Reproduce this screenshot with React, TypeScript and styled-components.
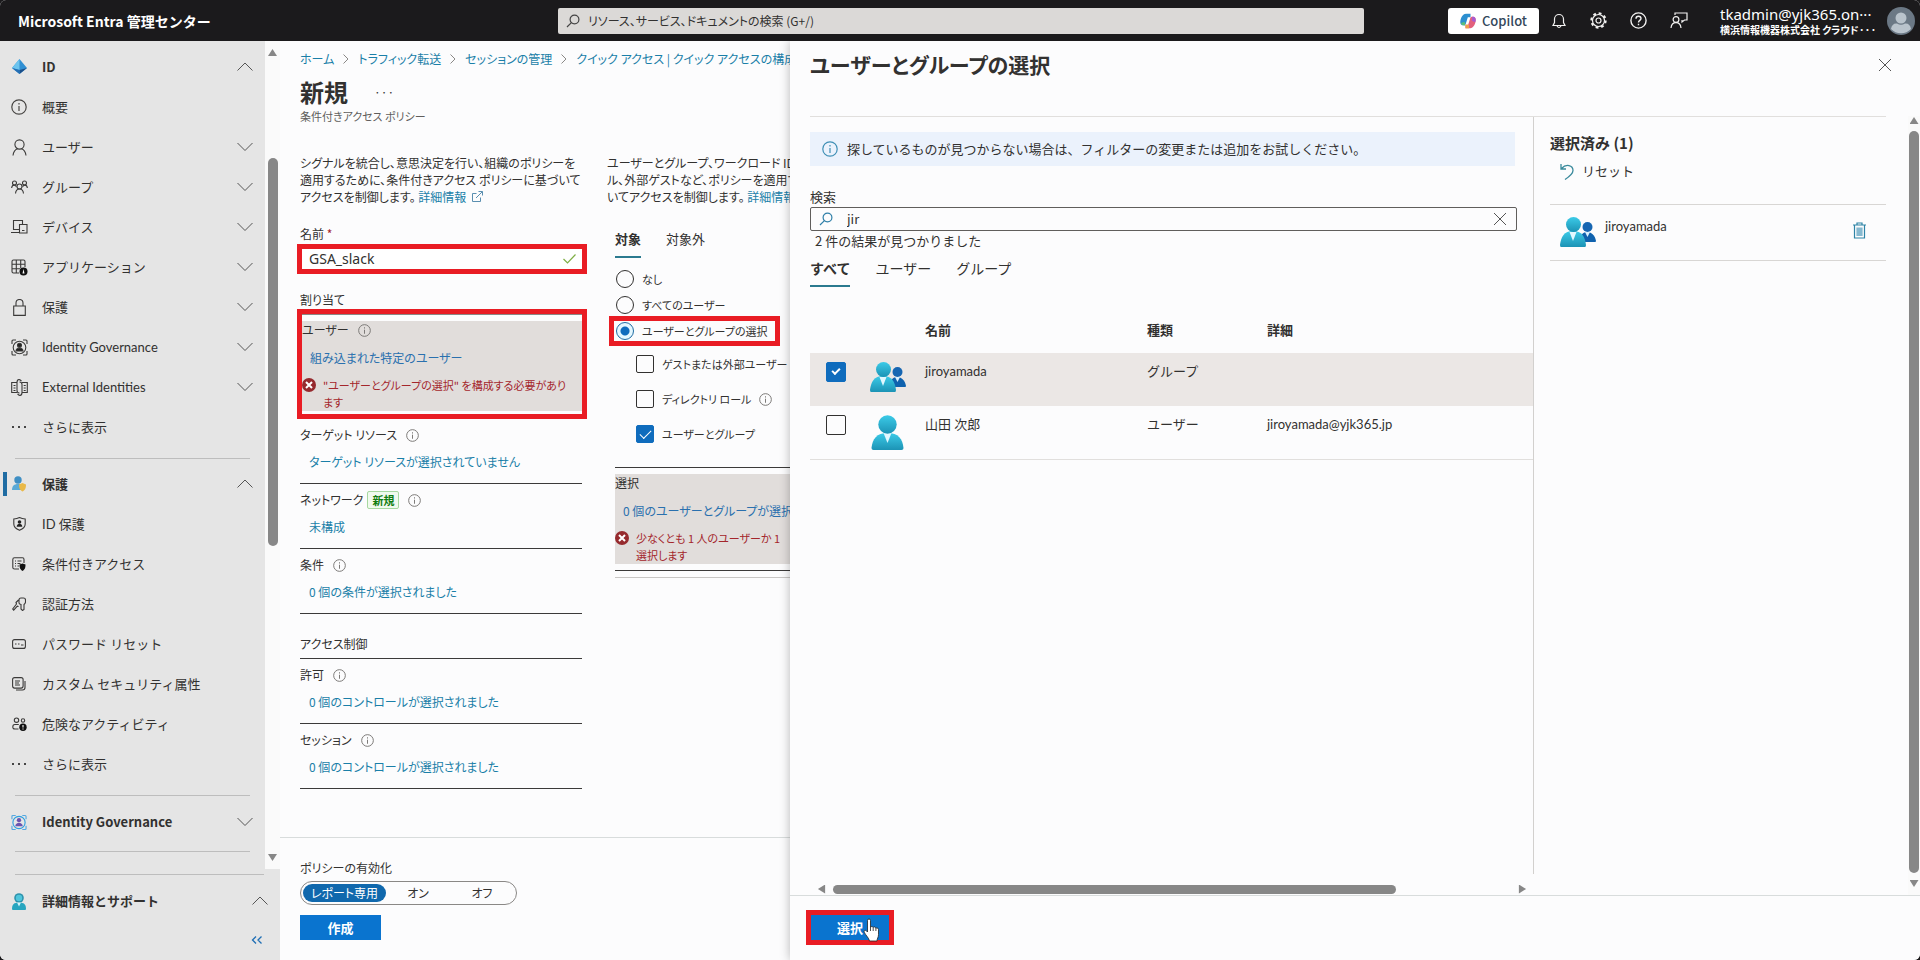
import React from "react";
import styled, { createGlobalStyle, css } from "styled-components";

const RED = "#e91c24";
const LINK = "#1a7fa8";
const LINE = "#3b3a39";

const GlobalStyle = createGlobalStyle`
  *, *::before, *::after { box-sizing: border-box; }
  body {
    margin: 0;
    background: #1b1a1c;
    color: #323130;
    font-family: "Noto Sans CJK JP", "Noto Sans", sans-serif;
    font-size: 13px;
    line-height: 18px;
  }
  button, input { font: inherit; color: inherit; }
  button { background: none; border: 0; padding: 0; cursor: pointer; }
  a { color: ${LINK}; text-decoration: none; }
  h1, h2, h3, p, ul { margin: 0; padding: 0; font-weight: inherit; font-size: inherit; }
  ul { list-style: none; }
  svg { display: block; flex: none; }
`;

const Shell = styled.div`
  display: flex;
  flex-direction: column;
  min-height: 100vh;
  background: #fcfcfd;
  border-radius: 6px;
  overflow: hidden;
`;

/* ---------- top bar ---------- */
const TopBar = styled.header`
  display: grid;
  grid-template-columns: 540px minmax(200px, 800fr) 540fr;
  align-items: center;
  height: 41px;
  background: #1b1a1c;
  color: #fff;
`;
const Brand = styled.a`
  padding-left: 18px;
  color: #fff;
  font-size: 14px;
  font-weight: 700;
  white-space: nowrap;
`;
const GlobalSearch = styled.label`
  display: flex;
  align-items: center;
  gap: 6px;
  height: 26px;
  margin-left: 18px;
  padding: 0 8px;
  border-radius: 2px;
  background: #dbd9d7;
  color: #323130;
  font-size: 12px;
  input {
    flex: 1;
    min-width: 0;
    border: 0;
    outline: 0;
    background: none;
    font-feature-settings: "palt";
  }
  input::placeholder { color: #323130; opacity: 1; }
`;
const TopActions = styled.div`
  display: flex;
  align-items: center;
  justify-content: flex-end;
  padding-right: 5px;
`;
const CopilotButton = styled.button`
  display: flex;
  align-items: center;
  justify-content: center;
  gap: 6px;
  width: 91px;
  height: 26px;
  border-radius: 3px;
  background: #fff;
  color: #33475b;
  font-size: 13px;
  font-weight: 500;
`;
const TopIcon = styled.button`
  display: grid;
  place-items: center;
  width: 40px;
  height: 40px;
`;
const Account = styled.div`
  width: 162px;
  margin-left: 21px;
  margin-right: 5px;
  white-space: nowrap;
`;
const AccountMail = styled.div`
  font-family: "Noto Sans", "Noto Sans CJK JP", sans-serif;
  font-size: 15px;
  line-height: 18px;
`;
const AccountOrg = styled.div`
  font-size: 10px;
  font-weight: 700;
  line-height: 14px;
  font-feature-settings: "palt";
`;

/* ---------- frame ---------- */
const Body = styled.div`
  display: flex;
  flex: 1;
`;

/* ---------- side navigation ---------- */
const Sidebar = styled.nav`
  display: flex;
  flex-direction: column;
  flex: none;
  width: 280px;
  background: #e5e5e5;
`;
const SideScroll = styled.div`
  display: flex;
  height: 828px;
`;
const SideList = styled.div`
  flex: 1;
  padding-top: 6px;
`;
const Rule = styled.hr<{ $before?: number; $after?: number; $right?: number }>`
  height: 1px;
  margin: ${(p) => p.$before ?? 11}px ${(p) => p.$right ?? 15}px ${(p) => p.$after ?? 5}px 15px;
  border: 0;
  background: #bdbdbd;
`;
const NavRow = styled.button<{ $strong?: boolean; $current?: boolean }>`
  display: flex;
  align-items: center;
  width: 100%;
  height: 40px;
  padding: 0 12px 0 ${(p) => (p.$current ? 7 : 10)}px;
  text-align: left;
  ${(p) =>
    p.$strong
      ? css`
          font-weight: 700;
        `
      : css`
          font-family: Lato, "Noto Sans CJK JP", sans-serif;
        `}
  ${(p) =>
    p.$current &&
    css`
      &::before {
        content: "";
        width: 4px;
        height: 24px;
        margin: 0 0 0 -4px;
        background: #1f6ca3;
      }
    `}
  > span:nth-of-type(1) {
    display: grid;
    place-items: center;
    width: 18px;
    margin-left: ${(p) => (p.$current ? 3 : 0)}px;
  }
  > span:nth-of-type(2) {
    flex: 1;
    margin-left: 14px;
  }
`;
const CollapseRow = styled.div`
  display: flex;
  justify-content: flex-end;
  padding: 10px 17px 0;
`;

/* ---------- scroll bars ---------- */
const VScroll = styled.div<{ $width: number; $top?: number }>`
  display: flex;
  flex-direction: column;
  align-items: center;
  flex: none;
  width: ${(p) => p.$width}px;
  padding: ${(p) => p.$top ?? 7}px 0 7px;
  background: #fafafa;
`;
const VTrack = styled.div`
  flex: 1;
  width: 10px;
  margin: 6px 0;
`;
const VThumb = styled.div<{ $offset?: number; $size: string }>`
  height: ${(p) => p.$size};
  margin-top: ${(p) => p.$offset ?? 0}px;
  border-radius: 5px;
  background: #878787;
`;
const HScrollRow = styled.div`
  display: grid;
  grid-template-columns: minmax(0, 724fr) minmax(0, 352fr);
  margin: -12px 34px 0 20px;
`;
const HScroll = styled.div`
  display: flex;
  align-items: center;
  height: 12px;
  padding: 0 7px;
`;
const HTrack = styled.div`
  flex: 1;
  margin: 0 7px;
`;
const HThumb = styled.div`
  width: 83%;
  height: 9px;
  border-radius: 5px;
  background: #878787;
`;
const Arrow = styled.i<{ $dir: "up" | "down" | "left" | "right" }>`
  width: 9px;
  height: 9px;
  background: #878787;
  clip-path: ${(p) =>
    ({
      up: "polygon(50% 10%, 100% 90%, 0 90%)",
      down: "polygon(0 10%, 100% 10%, 50% 90%)",
      left: "polygon(10% 50%, 90% 0, 90% 100%)",
      right: "polygon(10% 0, 90% 50%, 10% 100%)",
    })[p.$dir]};
`;

/* ---------- policy blade ---------- */
const Policy = styled.main`
  display: flex;
  flex-direction: column;
  flex: none;
  width: 510px;
  overflow: hidden;
  font-size: 12px;
  font-feature-settings: "palt";
  white-space: nowrap;
`;
const Crumbs = styled.nav`
  display: flex;
  align-items: center;
  gap: 9px;
  padding: 9px 0 0 20px;
`;
const TitleRow = styled.div`
  display: flex;
  align-items: center;
  gap: 26px;
  padding: 8px 0 0 20px;
  h1 {
    font-size: 24px;
    font-weight: 700;
    line-height: 32px;
  }
`;
const Subtitle = styled.p`
  padding-left: 20px;
  color: #605e5c;
  font-size: 11px;
  line-height: 17px;
`;
const Columns = styled.div`
  display: grid;
  grid-template-columns: 282px 1fr;
  column-gap: 25px;
  padding: 29px 0 0 20px;
`;
const Lead = styled.p`
  line-height: 17px;
`;
const InlineIcon = styled.span`
  display: inline-block;
  margin-left: 3px;
`;
const FieldLabel = styled.label`
  display: block;
  margin-top: 20px;
  em { color: #a4262c; font-style: normal; }
`;
const Marked = styled.div<{ $top: number }>`
  margin: ${(p) => p.$top}px -5px 0 -3px;
  border: 5px solid ${RED};
`;
const NameField = styled.div`
  display: flex;
  align-items: center;
  height: 20px;
  padding: 0 6px 0 7px;
  background: #fff;
  input {
    flex: 1;
    min-width: 0;
    padding: 0;
    border: 0;
    outline: 0;
    background: none;
    font-family: "Noto Sans", sans-serif;
    font-size: 14px;
    line-height: 18px;
  }
`;
const GroupHeading = styled.h2<{ $top: number; $ruled?: boolean }>`
  margin-top: ${(p) => p.$top}px;
  padding-bottom: ${(p) => (p.$ruled ? 5 : 0)}px;
  border-bottom: ${(p) => (p.$ruled ? `1px solid ${LINE}` : "0")};
`;
const Assignment = styled.section`
  height: 65px;
  padding-top: 7px;
  border-bottom: 1px solid ${LINE};
`;
const LabelLine = styled.div`
  display: flex;
  align-items: center;
  gap: 9px;
  height: 18px;
`;
const ValueLink = styled.a`
  display: block;
  margin: 9px 0 0 9px;
`;
const NewBadge = styled.span`
  margin: 0 0 0 -5px;
  padding: 0 4px;
  border: 1px solid #a7d8a0;
  border-radius: 2px;
  background: #f0faee;
  color: #107c10;
  font-size: 11px;
  font-weight: 700;
  line-height: 16px;
`;
const Invalid = styled.section`
  background: #e1dddb;
  ${ValueLink} {
    margin: 10px 0 0 8px;
    color: #2a70ae;
  }
`;
const ErrorLine = styled.div`
  display: flex;
  gap: 7px;
  margin-top: 10px;
  color: #a4262c;
  font-size: 11px;
  line-height: 17px;
  svg { margin-top: 1px; }
`;
const InvalidFrame = styled.div`
  padding: 6px 0 3px;
  border-top: 1px solid #8a8886;
`;
const ConditionBody = styled.div`
  padding-left: 8px;
`;

/* ---------- tabs ---------- */
const Tabs = styled.div<{ $gap: number; $size: number }>`
  display: flex;
  gap: ${(p) => p.$gap}px;
  font-size: ${(p) => p.$size}px;
`;
const ConditionTabs = styled(Tabs)`
  margin: 25px 0 8px;
`;
const Tab = styled.button<{ $on?: boolean }>`
  height: 28px;
  padding-bottom: 8px;
  border-bottom: 2px solid ${(p) => (p.$on ? "#2b7a8f" : "transparent")};
  font-weight: ${(p) => (p.$on ? 700 : 400)};
`;

/* ---------- choices ---------- */
const Choice = styled.label<{ $height: number; $indent?: number }>`
  display: flex;
  align-items: center;
  gap: 8px;
  height: ${(p) => p.$height}px;
  margin-left: ${(p) => p.$indent ?? 1}px;
  font-size: 11px;
`;
const Radio = styled.input.attrs({ type: "radio" })`
  appearance: none;
  flex: none;
  width: 18px;
  height: 18px;
  margin: 0;
  border: 1px solid #323130;
  border-radius: 50%;
  &:checked {
    border-color: #1f6ca3;
    background: radial-gradient(circle, #0f6cbd 4px, #e4f7ff 5px);
  }
`;
const Check = styled.input.attrs({ type: "checkbox" })<{ $bold?: boolean }>`
  appearance: none;
  display: grid;
  place-items: center;
  flex: none;
  width: ${(p) => (p.$bold ? 20 : 18)}px;
  height: ${(p) => (p.$bold ? 20 : 18)}px;
  margin: 0;
  border: 1px solid #323130;
  border-radius: 2px;
  &:checked {
    border-color: #0f6cbd;
    background: #0f6cbd;
  }
  &:checked::before {
    content: "";
    width: ${(p) => (p.$bold ? 8 : 11)}px;
    height: ${(p) => (p.$bold ? 5 : 6)}px;
    margin-top: -3px;
    border: solid #fff;
    border-width: 0 0 ${(p) => (p.$bold ? "2px 2px" : "1px 1px")};
    rotate: -45deg;
  }
`;
const MarkedChoice = styled.div`
  width: 171px;
  margin: -2px 0 0 -6px;
  border: 5px solid ${RED};
  padding-left: 1px;
`;
const SelectBlock = styled.div`
  margin-top: 15px;
  padding: 6px 0;
  border-top: 1px solid ${LINE};
  border-bottom: 1px solid ${LINE};
`;
const ThinLine = styled.hr`
  height: 1px;
  margin: 6px 0 0;
  border: 0;
  background: #c8c6c4;
`;

/* ---------- policy footer ---------- */
const PolicyFooter = styled.footer`
  margin-top: auto;
  height: 123px;
  padding: 21px 20px 0;
  border-top: 1px solid #d8dcdc;
`;
const Toggle = styled.div`
  display: grid;
  grid-template-columns: 83px 64px 64px;
  width: 217px;
  height: 24px;
  margin: 4px 0 10px;
  padding: 2px;
  border: 1px solid #8a8886;
  border-radius: 12px;
`;
const ToggleOption = styled.button<{ $on?: boolean }>`
  border-radius: 9px;
  line-height: 18px;
  font-feature-settings: "palt";
  ${(p) => p.$on && "background: #1068ad; color: #fff;"}
`;
const Primary = styled.button<{ $width: number }>`
  display: block;
  width: ${(p) => p.$width}px;
  height: 25px;
  background: #0a74cf;
  color: #fff;
  font-size: 13px;
  font-weight: 700;
`;

/* ---------- selection panel ---------- */
const Panel = styled.aside`
  display: flex;
  flex-direction: column;
  flex: 1;
  min-width: 0;
  position: relative;
  background: #fcfcfd;
  box-shadow: 0 0 10px rgba(0, 0, 0, 0.28);
  clip-path: inset(0 0 0 -12px);
`;
const PanelHead = styled.div`
  display: flex;
  justify-content: space-between;
  align-items: flex-start;
  height: 75px;
  padding: 4px 28px 0 20px;
  h2 {
    font-size: 21px;
    font-weight: 700;
    line-height: 38px;
    font-feature-settings: "palt";
  }
  button { padding-top: 13px; }
`;
const PanelBody = styled.div`
  display: flex;
  flex: 1;
`;
const PanelContent = styled.div`
  display: grid;
  grid-template-columns: minmax(0, 724fr) minmax(0, 352fr);
  flex: 1;
  margin: 0 22px 21px 20px;
  border-top: 1px solid #e1dfdd;
`;
const Results = styled.section`
  display: flex;
  flex-direction: column;
  padding-top: 15px;
  border-right: 1px solid #d2d0ce;
`;
const Notice = styled.p`
  display: flex;
  align-items: center;
  gap: 9px;
  height: 34px;
  margin-right: 18px;
  padding-left: 12px;
  background: #ebf2fc;
`;
const SearchLabel = styled.label`
  display: block;
  margin-top: 22px;
`;
const SearchBox = styled.div`
  display: flex;
  align-items: center;
  height: 24px;
  margin: 1px 16px 1px 0;
  padding: 0 9px 0 8px;
  border: 1px solid #605e5c;
  border-radius: 2px;
  input {
    flex: 1;
    min-width: 0;
    margin-left: 14px;
    padding: 0;
    border: 0;
    outline: 0;
    background: none;
  }
`;
const Count = styled.p`
  margin: 0 0 9px 5px;
`;
const ResultTable = styled.table`
  width: 100%;
  margin-top: 31px;
  border-collapse: collapse;
  table-layout: fixed;
  th, td {
    padding: 0;
    text-align: left;
    vertical-align: top;
  }
  th { height: 35px; padding-top: 3px; font-weight: 700; }
  tbody tr { height: 53px; }
  td {
    padding-top: 9px;
    font-family: Lato, "Noto Sans CJK JP", sans-serif;
  }
  td:first-child { padding-left: 16px; }
  tbody tr:first-child { background: #ebe7e5; }
  tbody tr:last-child { border-bottom: 1px solid #e1dfdd; }
`;
const Side = styled.section`
  padding: 16px 0 0 16px;
  h3 {
    font-size: 15px;
    font-weight: 700;
    line-height: 20px;
  }
`;
const ResetButton = styled.button`
  display: flex;
  align-items: center;
  gap: 8px;
  margin: 9px 0 24px 10px;
`;
const Picked = styled.div`
  display: flex;
  gap: 9px;
  height: 57px;
  padding: 12px 20px 0 10px;
  border-top: 1px solid #d8d6d4;
  border-bottom: 1px solid #d8d6d4;
  > span { flex: 1; font-family: Lato, sans-serif; }
  > button { align-self: flex-start; margin-top: 5px; }
`;
const PanelFooter = styled.footer`
  height: 65px;
  padding: 14px 0 0 16px;
  border-top: 1px solid #d8dcdc;
`;
const MarkedButton = styled.div`
  position: relative;
  width: 88px;
  border: 5px solid ${RED};
`;
const Pointer = styled.span`
  position: absolute;
  left: 52px;
  top: 3px;
`;

/* ---------- icons ---------- */
const Chevron = ({ up }: { up?: boolean }) => (
  <svg width="16" height="10" viewBox="0 0 16 10" fill="none" stroke="#555">
    <path d={up ? "M.5 8.5 8 1l7.5 7.5" : "M.5 1 8 8.5 15.5 1"} />
  </svg>
);
const CrumbSep = () => (
  <svg width="6" height="10" viewBox="0 0 6 10" fill="none" stroke="#8a8886">
    <path d="M.5.5 5 5 .5 9.5" />
  </svg>
);
const Info = ({ size = 13, color = "#797775" }: { size?: number; color?: string }) => (
  <svg width={size} height={size} viewBox="0 0 16 16" fill="none" stroke={color} strokeWidth="1.2">
    <circle cx="8" cy="8" r="7.2" />
    <path d="M8 7v5M8 4v1.6" />
  </svg>
);
const ErrorIcon = () => (
  <svg width="14" height="14" viewBox="0 0 14 14">
    <circle cx="7" cy="7" r="7" fill="#962a2e" />
    <path d="m4 4 6 6m0-6-6 6" stroke="#fff" strokeWidth="2" />
  </svg>
);
const Cross = ({ size = 14 }: { size?: number }) => (
  <svg width={size} height={size} viewBox="0 0 14 14" stroke="#555">
    <path d="m1 1 12 12M13 1 1 13" />
  </svg>
);
const Magnifier = ({ color }: { color: string }) => (
  <svg width="14" height="14" viewBox="0 0 14 14" fill="none" stroke={color} strokeWidth="1.2">
    <circle cx="8.5" cy="5.5" r="4.4" />
    <path d="M5.4 8.6 1 13" />
  </svg>
);
const ExternalLink = () => (
  <InlineIcon>
    <svg width="11" height="11" viewBox="0 0 11 11" fill="none" stroke="#5a8fb0">
      <path d="M4.500 2.500h-4v8h8v-4M4 7l6.300-6.300M6.500.5h4v4" />
    </svg>
  </InlineIcon>
);
const Tick = () => (
  <svg width="13" height="10" viewBox="0 0 13 10" fill="none" stroke="#7fae45" strokeWidth="1.200">
    <path d="m.5 5 4 4 8-8.500" />
  </svg>
);
const Person = ({ width, height, group }: { width: number; height: number; group?: boolean }) => (
  <svg width={width} height={height} viewBox={group ? "0 0 36 30" : "0 0 32 35"}>
    <defs>
      <linearGradient id="teal" x1="0" y1="0" x2="0" y2="1">
        <stop offset="0" stopColor="#3ccbe8" />
        <stop offset="1" stopColor="#1c93b5" />
      </linearGradient>
    </defs>
    {group ? (
      <>
        <path d="M20 24c0-6 3-9 7-9s8 3 9 9q0 1-1 1H20z" fill="#0f62ae" />
        <path d="m25 15 2.500 5 2.500-5z" fill="#d9f1ff" />
        <circle cx="27.500" cy="10" r="5" fill="#1666b2" />
        <path d="M1 30q-1 0-1-2c1-8 4-14 13-14s12 6 13 14q0 2-1 2z" fill="url(#teal)" />
        <path d="m9.500 15 3.500 9 3.500-9z" fill="#e2f8ff" />
        <circle cx="13.500" cy="7.500" r="7.500" fill="url(#teal)" />
      </>
    ) : (
      <>
        <path d="M2 35q-2 0-2-2c1-9 5-15 16-15s15 6 16 15q0 2-2 2z" fill="url(#teal)" />
        <path d="m12 18 4 10 4-10z" fill="#e2f8ff" />
        <circle cx="16" cy="9.500" r="9.200" fill="url(#teal)" />
      </>
    )}
  </svg>
);
const Hand = () => (
  <svg width="17" height="24" viewBox="0 0 17 24" fill="#fff" stroke="#222" strokeWidth=".8">
    <path d="M4.500 14V2.500a1.500 1.500 0 0 1 3 0V9q1.500-1.200 2.700.3 1.700-1 2.600.6 2.400-.6 2.700 1.600v5c0 3-1.500 4-1.500 6.500H6.500C6 20 2.500 17 1.200 14.200c-.6-1.500 1-2.400 2-1.500z" />
    <path d="M7.500 9v4M10.200 9.500V13M12.900 10v3" />
  </svg>
);

const line = { fill: "none", stroke: "#3b3a39", strokeWidth: 1.1 };
const NAV_ICONS: Record<string, React.ReactNode> = {
  entra: (
    <svg width="17" height="16" viewBox="0 0 17 16">
      <path d="M8.500 0 1 9l7.500 6L16 9z" fill="#2f8fd3" />
      <path d="M8.500 0 1 9l7.500 2z" fill="#6cc4ee" />
      <path d="M8.500 11 16 9l-7.500 6z" fill="#1b4f8a" />
      <path d="M8.500 11 1 9l7.500 6z" fill="#256fb4" />
    </svg>
  ),
  info: <Info size={16} color="#484644" />,
  user: (
    <svg width="15" height="17" viewBox="0 0 15 17" {...line}>
      <circle cx="7.500" cy="5.500" r="4.600" />
      <path d="M1 16.500c.5-4 2-6 4.500-6.800M14 16.500c-.5-4-2-6-4.500-6.800" />
    </svg>
  ),
  group: (
    <svg width="17" height="14" viewBox="0 0 17 14" {...line}>
      <circle cx="3.500" cy="3" r="2" />
      <circle cx="13.500" cy="3" r="2" />
      <circle cx="8.500" cy="6.500" r="2.500" />
      <path d="M.6 8c.2-2 1-3 2.900-3l2 1.500M16.400 8c-.2-2-1-3-2.900-3l-2 1.500M4.500 13.500c.3-3 1.500-4.500 4-4.500s3.700 1.500 4 4.500" />
    </svg>
  ),
  device: (
    <svg width="17" height="14" viewBox="0 0 17 14" {...line}>
      <path d="M8 9.500H2.500v-9h9V4M0 12.500h8" />
      <path d="M8.500 4.500h7.500v8.500H8.500zM11 10.500h2.500" />
    </svg>
  ),
  apps: (
    <svg width="17" height="17" viewBox="0 0 17 17" {...line}>
      <path d="M8 14H2.500Q1 14 1 12.500v-10Q1 1 2.500 1h10Q14 1 14 2.500V8M1 5.300h13M1 9.700h8M5.300 1v13M9.700 1v8" />
      <circle cx="12.500" cy="12.500" r="4" fill="#111" stroke="none" />
      <path d="m12.500 10 1 4.500h-2z" fill="#fff" stroke="none" />
    </svg>
  ),
  lock: (
    <svg width="13" height="17" viewBox="0 0 13 17" {...line}>
      <path d="M.7 7h11.600v9.400H.7zM3 7V4a3.500 3.500 0 0 1 7 0v3" />
    </svg>
  ),
  governance: (
    <svg width="17" height="17" viewBox="0 0 17 17" {...line}>
      <path d="M1 5V2q0-1 1-1h3M12 1h3q1 0 1 1v3M16 12v3q0 1-1 1h-3M5 16H2q-1 0-1-1v-3" />
      <circle cx="8.500" cy="8.500" r="6.300" />
      <circle cx="8.500" cy="6.300" r="2" fill="#222" />
      <path d="M5 12c.3-4 6.700-4 7 0z" fill="#222" />
    </svg>
  ),
  external: (
    <svg width="17" height="17" viewBox="0 0 17 17" {...line}>
      <path d="M6 3.500H.7v10H6M11 3.500h5.300v10H11M6 3.500q0-3 2.500-3M11 13.500q0 3-2.500 3M8.500 3q2.500 0 2.500 2.500v8M8.500 14Q6 14 6 11.500v-8M8.500.5l2 1.500M8.500 16.500l-2-1.500" />
      <path d="M2.500 6.500h2M2.500 9h2M2.500 11.500h2M12.700 6.500h2M12.700 9h2M12.700 11.500h2" />
    </svg>
  ),
  more: (
    <svg width="16" height="2" viewBox="0 0 16 2" fill="#444">
      <path d="M1 0h2v2H1zM7 0h2v2H7zM13 0h2v2h-2z" />
    </svg>
  ),
  protect: (
    <svg width="16" height="16" viewBox="0 0 16 16">
      <circle cx="7" cy="4" r="3.700" fill="#3f8fc4" />
      <path d="M1 14c0-4 2-6 6-6s5 2 6 6z" fill="#5aa9d6" />
      <path d="M8 8.500 11.500 7 15 8.500c0 4-1 5.500-3.500 7C9 14 8 12.500 8 8.500z" fill="#e9b949" />
    </svg>
  ),
  shield: (
    <svg width="13" height="14" viewBox="0 0 13 14" {...line}>
      <path d="M.8 2Q4 2 6.500.6 9 2 12.200 2v5q0 4-5.700 6.300Q.8 11 .8 7z" />
      <circle cx="6.500" cy="5" r="1.800" fill="#222" stroke="none" />
      <path d="M3.700 9.800c0-4 5.600-4 5.600 0z" fill="#222" stroke="none" />
    </svg>
  ),
  conditional: (
    <svg width="14" height="14" viewBox="0 0 14 14" {...line}>
      <path d="M7 12H2.500Q.8 12 .8 10.500v-8Q.8.8 2.500.8h8q1.500 0 1.500 1.700V6M3 4h1m1.500 0h4M3 6.500h1m1.500 0h3M3 9h1m1.500 0H7" />
      <path d="m7.500 7.500 3-1 3 1c0 4-1 5-3 6.500-2-1.500-3-2.500-3-6.500z" fill="#111" stroke="none" />
    </svg>
  ),
  keys: (
    <svg width="14" height="14" viewBox="0 0 14 14" {...line}>
      <path d="M7 6V3q0-2 2-2h2.500q2 0 2 2v2q0 1.500-1.500 2.500v5L10.500 13.500 9 12V7.500Q7 7 7 6zM6.500 3 4 5.500l.5 1.500L.7 12l1 1.200 3.600-4 1.300.300" />
    </svg>
  ),
  password: (
    <svg width="14" height="10" viewBox="0 0 14 10" {...line}>
      <rect x=".6" y=".6" width="12.800" height="8.800" rx="2" />
      <path d="M3 5h1.500M6 5h1.500M9 6h2.500" />
    </svg>
  ),
  attributes: (
    <svg width="14" height="14" viewBox="0 0 14 14" {...line}>
      <rect x=".6" y=".6" width="10.500" height="10.500" rx="2" />
      <path d="M3 4h5M3 6h4M3 8h5M13 4v6.500q0 2.500-2.500 2.500H4" />
    </svg>
  ),
  risky: (
    <svg width="15" height="14" viewBox="0 0 15 14" {...line}>
      <circle cx="4.500" cy="3.200" r="2.200" />
      <circle cx="11" cy="3.500" r="1.700" />
      <path d="M6.500 12H3Q.8 12 .8 10q0-2.500 2-2.500h4" />
      <circle cx="11" cy="10.200" r="3.700" fill="#111" stroke="none" />
      <path d="M11 8v2.500M11 11.500v1" stroke="#fff" />
    </svg>
  ),
  governanceColor: (
    <svg width="16" height="17" viewBox="0 0 17 17" fill="none" stroke="#2d9fe0" strokeWidth="1.200">
      <path d="M1 5V2q0-1 1-1h3M12 1h3q1 0 1 1v3M16 12v3q0 1-1 1h-3M5 16H2q-1 0-1-1v-3" stroke="#54a8e0" />
      <circle cx="8.500" cy="8.500" r="6.500" />
      <circle cx="8.500" cy="6" r="2.300" fill="#6b55b0" stroke="none" />
      <path d="M4.500 12.500c.3-5 7.700-5 8 0z" fill="#6b55b0" stroke="none" />
    </svg>
  ),
  support: (
    <svg width="14" height="17" viewBox="0 0 14 17">
      <circle cx="7" cy="5" r="4.800" fill="#2d93ad" />
      <circle cx="7" cy="5" r="3.200" fill="#4fc6dc" />
      <path d="M0 16c0-4.500 2-6.500 7-6.500s7 2 7 6.500q0 1-1 1H1q-1 0-1-1z" fill="#27a5bf" />
      <path d="m5 9.500 2 4 2-4z" fill="#d6f6fb" />
    </svg>
  ),
};

type NavItem = { icon: string; label: string; chevron?: "up" | "down"; strong?: boolean; current?: boolean };

const ID_ITEMS: NavItem[] = [
  { icon: "entra", label: "ID", chevron: "up", strong: true },
  { icon: "info", label: "概要" },
  { icon: "user", label: "ユーザー", chevron: "down" },
  { icon: "group", label: "グループ", chevron: "down" },
  { icon: "device", label: "デバイス", chevron: "down" },
  { icon: "apps", label: "アプリケーション", chevron: "down" },
  { icon: "lock", label: "保護", chevron: "down" },
  { icon: "governance", label: "Identity Governance", chevron: "down" },
  { icon: "external", label: "External Identities", chevron: "down" },
  { icon: "more", label: "さらに表示" },
];
const PROTECT_ITEMS: NavItem[] = [
  { icon: "protect", label: "保護", chevron: "up", strong: true, current: true },
  { icon: "shield", label: "ID 保護" },
  { icon: "conditional", label: "条件付きアクセス" },
  { icon: "keys", label: "認証方法" },
  { icon: "password", label: "パスワード リセット" },
  { icon: "attributes", label: "カスタム セキュリティ属性" },
  { icon: "risky", label: "危険なアクティビティ" },
  { icon: "more", label: "さらに表示" },
];

const NavEntry = ({ item }: { item: NavItem }) => (
  <NavRow $strong={item.strong} $current={item.current}>
    <span>{NAV_ICONS[item.icon]}</span>
    <span>{item.label}</span>
    {item.chevron && <Chevron up={item.chevron === "up"} />}
  </NavRow>
);

const Setting = ({ label, value, badge }: { label: string; value: string; badge?: string }) => (
  <Assignment>
    <LabelLine>
      {label}
      {badge && <NewBadge>{badge}</NewBadge>}
      <Info />
    </LabelLine>
    <ValueLink href="#">{value}</ValueLink>
  </Assignment>
);

const topLine = { fill: "none", stroke: "#f3f2f1", strokeWidth: 1.2 };

export default function App() {
  return (
    <Shell>
      <GlobalStyle />
      <TopBar>
        <Brand href="#">Microsoft Entra 管理センター</Brand>
        <GlobalSearch>
          <Magnifier color="#444" />
          <input aria-label="検索" placeholder="リソース、サービス、ドキュメントの検索 (G+/)" />
        </GlobalSearch>
        <TopActions>
          <CopilotButton>
            <svg width="16" height="16" viewBox="0 0 16 16" fill="none" strokeWidth="3.600" strokeLinejoin="round">
              <path d="M10.500 2.500H6.500L4 10.500H2.500Q1.500 10 2.500 6.500T6 2.500" stroke="#2c8fd0" />
              <path d="M2.600 9.500Q3 11 5 10.700" stroke="#5bbf7a" />
              <path d="M5.500 13.500H9.500L12 5.500H13.500Q14.500 6 13.500 9.500T10 13.500" stroke="#e2607c" />
              <path d="M5.500 13.500H9" stroke="#f0a04b" />
              <path d="M12 5.500h1.500q.8 1 0 3" stroke="#a65bd0" />
            </svg>
            Copilot
          </CopilotButton>
          <TopIcon aria-label="通知">
            <svg width="14" height="16" viewBox="0 0 14 16" {...topLine}>
              <path d="M1 12.500h12l-1.500-3V6a4.500 4.500 0 0 0-9 0v3.500zM5 13q2 3 4 0" />
            </svg>
          </TopIcon>
          <TopIcon aria-label="設定">
            <svg width="17" height="17" viewBox="0 0 17 17" {...topLine}>
              <circle cx="8.500" cy="8.500" r="2.500" />
              <circle cx="8.500" cy="8.500" r="6" />
              <circle cx="8.500" cy="8.500" r="7.200" strokeWidth="2" strokeDasharray="2.800 2.850" />
            </svg>
          </TopIcon>
          <TopIcon aria-label="ヘルプ">
            <svg width="17" height="17" viewBox="0 0 17 17" {...topLine} strokeWidth={1.4}>
              <circle cx="8.500" cy="8.500" r="7.600" />
              <path d="M6 6.800c0-3.500 5-3.200 5-.3 0 1.800-2.500 2-2.500 4M8.500 11.800v1.500" />
            </svg>
          </TopIcon>
          <TopIcon aria-label="フィードバック">
            <svg width="18" height="17" viewBox="0 0 18 17" {...topLine}>
              <circle cx="6" cy="7.500" r="2.900" />
              <path d="M1 16c.3-3.500 2-5.300 5-5.300s4.700 1.800 5 5.300M5 3V1h12v7h-2.500L12 10V8" />
            </svg>
          </TopIcon>
          <Account>
            <AccountMail>tkadmin@yjk365.on···</AccountMail>
            <AccountOrg>横浜情報機器株式会社 クラウド···</AccountOrg>
          </Account>
          <svg width="28" height="28" viewBox="0 0 28 28">
            <circle cx="14" cy="14" r="14" fill="#6b7885" />
            <circle cx="14" cy="11" r="5.500" fill="#b9c3cc" />
            <path d="M4 22q1-6 6-5.500 4 2.500 8 0 5-.5 6 5.500a14 14 0 0 1-20 0z" fill="#b9c3cc" />
          </svg>
        </TopActions>
      </TopBar>

      <Body>
        <Sidebar>
          <SideScroll>
            <SideList>
              {ID_ITEMS.map((item) => (
                <NavEntry key={item.label} item={item} />
              ))}
              <Rule />
              {PROTECT_ITEMS.map((item) => (
                <NavEntry key={item.label} item={item} />
              ))}
              <Rule $after={6} />
              <NavEntry item={{ icon: "governanceColor", label: "Identity Governance", chevron: "down", strong: true }} />
              <Rule $before={9} $after={0} />
            </SideList>
            <VScroll $width={15}>
              <Arrow $dir="up" />
              <VTrack>
                <VThumb $offset={95} $size="388px" />
              </VTrack>
              <Arrow $dir="down" />
            </VScroll>
          </SideScroll>
          <Rule $before={5} $after={6} $right={16} />
          <NavEntry item={{ icon: "support", label: "詳細情報とサポート", chevron: "up", strong: true }} />
          <CollapseRow>
            <button aria-label="折りたたむ">
              <svg width="12" height="18" viewBox="0 0 12 18" fill="none" stroke="#1f6fb5" strokeWidth="1.300">
                <path d="M5 5.500 1.500 9 5 12.500M10.500 5.500 7 9l3.500 3.500" />
              </svg>
            </button>
          </CollapseRow>
        </Sidebar>

        <Policy>
          <Crumbs>
            <a href="#">ホーム</a>
            <CrumbSep />
            <a href="#">トラフィック転送</a>
            <CrumbSep />
            <a href="#">セッションの管理</a>
            <CrumbSep />
            <a href="#">クイック アクセス | クイック アクセスの構成</a>
          </Crumbs>
          <TitleRow>
            <h1>新規</h1>
            <button aria-label="その他">···</button>
          </TitleRow>
          <Subtitle>条件付きアクセス ポリシー</Subtitle>

          <Columns>
            <div>
              <Lead>
                シグナルを統合し、意思決定を行い、組織のポリシーを
                <br />
                適用するために、条件付きアクセス ポリシーに基づいて
                <br />
                アクセスを制御します。 <a href="#">詳細情報 <ExternalLink /></a>
              </Lead>
              <FieldLabel htmlFor="policy-name">
                名前 <em>*</em>
              </FieldLabel>
              <Marked $top={1}>
                <NameField>
                  <input id="policy-name" defaultValue="GSA_slack" />
                  <Tick />
                </NameField>
              </Marked>
              <GroupHeading $top={17}>割り当て</GroupHeading>
              <Marked $top={0}>
                <InvalidFrame>
                  <Invalid>
                    <LabelLine>
                      ユーザー <Info />
                    </LabelLine>
                    <ValueLink href="#">組み込まれた特定のユーザー</ValueLink>
                    <ErrorLine>
                      <ErrorIcon />
                      <p>
                        "ユーザーとグループの選択" を構成する必要があり
                        <br />
                        ます
                      </p>
                    </ErrorLine>
                  </Invalid>
                </InvalidFrame>
              </Marked>
              <Setting label="ターゲット リソース" value="ターゲット リソースが選択されていません" />
              <Setting label="ネットワーク" badge="新規" value="未構成" />
              <Setting label="条件" value="0 個の条件が選択されました" />
              <GroupHeading $top={21} $ruled>
                アクセス制御
              </GroupHeading>
              <Setting label="許可" value="0 個のコントロールが選択されました" />
              <Setting label="セッション" value="0 個のコントロールが選択されました" />
            </div>

            <div>
              <Lead>
                ユーザーとグループ、ワークロード ID、
                <br />
                ル、外部ゲストなど、ポリシーを適用す
                <br />
                いてアクセスを制御します。 <a href="#">詳細情報</a>
              </Lead>
              <ConditionBody>
                <ConditionTabs $gap={25} $size={13}>
                  <Tab $on>対象</Tab>
                  <Tab>対象外</Tab>
                </ConditionTabs>
                <Choice $height={26}>
                  <Radio name="scope" />
                  なし
                </Choice>
                <Choice $height={26}>
                  <Radio name="scope" />
                  すべてのユーザー
                </Choice>
                <MarkedChoice>
                  <Choice $height={20}>
                    <Radio name="scope" defaultChecked />
                    ユーザーとグループの選択
                  </Choice>
                </MarkedChoice>
                <Choice $height={36} $indent={21}>
                  <Check />
                  ゲストまたは外部ユーザー
                </Choice>
                <Choice $height={34} $indent={21}>
                  <Check />
                  ディレクトリ ロール
                  <Info />
                </Choice>
                <Choice $height={36} $indent={21}>
                  <Check defaultChecked />
                  ユーザーとグループ
                </Choice>
                <SelectBlock>
                  <Invalid>
                    <LabelLine>選択</LabelLine>
                    <ValueLink href="#">0 個のユーザーとグループが選択</ValueLink>
                    <ErrorLine>
                      <ErrorIcon />
                      <p>
                        少なくとも 1 人のユーザーか 1
                        <br />
                        選択します
                      </p>
                    </ErrorLine>
                  </Invalid>
                </SelectBlock>
                <ThinLine />
              </ConditionBody>
            </div>
          </Columns>

          <PolicyFooter>
            <div id="enable-policy">ポリシーの有効化</div>
            <Toggle role="group" aria-labelledby="enable-policy">
              <ToggleOption $on>レポート専用</ToggleOption>
              <ToggleOption>オン</ToggleOption>
              <ToggleOption>オフ</ToggleOption>
            </Toggle>
            <Primary $width={81}>作成</Primary>
          </PolicyFooter>
        </Policy>

        <Panel>
          <PanelHead>
            <h2>ユーザーとグループの選択</h2>
            <button aria-label="閉じる">
              <Cross />
            </button>
          </PanelHead>
          <PanelBody>
            <PanelContent>
              <Results>
                <Notice>
                  <Info size={16} color="#3f8fb5" />
                  探しているものが見つからない場合は、フィルターの変更または追加をお試しください。
                </Notice>
                <SearchLabel htmlFor="member-search">検索</SearchLabel>
                <SearchBox>
                  <Magnifier color="#2f7fa8" />
                  <input id="member-search" defaultValue="jir" />
                  <button aria-label="クリア">
                    <Cross />
                  </button>
                </SearchBox>
                <Count>2 件の結果が見つかりました</Count>
                <Tabs $gap={25} $size={14}>
                  <Tab $on>すべて</Tab>
                  <Tab>ユーザー</Tab>
                  <Tab>グループ</Tab>
                </Tabs>
                <ResultTable>
                  <colgroup>
                    <col width="60" />
                    <col width="55" />
                    <col width="222" />
                    <col width="120" />
                    <col />
                  </colgroup>
                  <thead>
                    <tr>
                      <th />
                      <th />
                      <th>名前</th>
                      <th>種類</th>
                      <th>詳細</th>
                    </tr>
                  </thead>
                  <tbody>
                    <tr>
                      <td>
                        <Check $bold defaultChecked aria-label="jiroyamada" />
                      </td>
                      <td>
                        <Person width={36} height={30} group />
                      </td>
                      <td>jiroyamada</td>
                      <td>グループ</td>
                      <td />
                    </tr>
                    <tr>
                      <td>
                        <Check $bold aria-label="山田 次郎" />
                      </td>
                      <td>
                        <Person width={35} height={35} />
                      </td>
                      <td>山田 次郎</td>
                      <td>ユーザー</td>
                      <td>jiroyamada@yjk365.jp</td>
                    </tr>
                  </tbody>
                </ResultTable>
              </Results>
              <Side>
                <h3>選択済み (1)</h3>
                <ResetButton>
                  <svg width="14" height="17" viewBox="0 0 14 17" fill="none" stroke="#3a8a9c" strokeWidth="1.300">
                    <path d="M1 1v5h5M1.500 5.500C6 .5 13 2 13 7.500c0 3-3.500 6-8 9" />
                  </svg>
                  リセット
                </ResetButton>
                <Picked>
                  <Person width={36} height={30} group />
                  <span>jiroyamada</span>
                  <button aria-label="削除">
                    <svg width="13" height="17" viewBox="0 0 13 17" fill="none" stroke="#2d83a6" strokeWidth="1.200">
                      <path d="M0 3h13M4 3V1h5v2M1.500 3v13h10V3" />
                      <path d="M4 6h5v7.500H4z" fill="#86b9d0" stroke="#86b9d0" />
                    </svg>
                  </button>
                </Picked>
              </Side>
            </PanelContent>
            <VScroll $width={12} $top={0}>
              <Arrow $dir="up" />
              <VTrack>
                <VThumb $size="100%" />
              </VTrack>
              <Arrow $dir="down" />
            </VScroll>
          </PanelBody>
          <HScrollRow>
            <HScroll>
              <Arrow $dir="left" />
              <HTrack>
                <HThumb />
              </HTrack>
              <Arrow $dir="right" />
            </HScroll>
          </HScrollRow>
          <PanelFooter>
            <MarkedButton>
              <Primary $width={78}>選択</Primary>
              <Pointer>
                <Hand />
              </Pointer>
            </MarkedButton>
          </PanelFooter>
        </Panel>
      </Body>
    </Shell>
  );
}
